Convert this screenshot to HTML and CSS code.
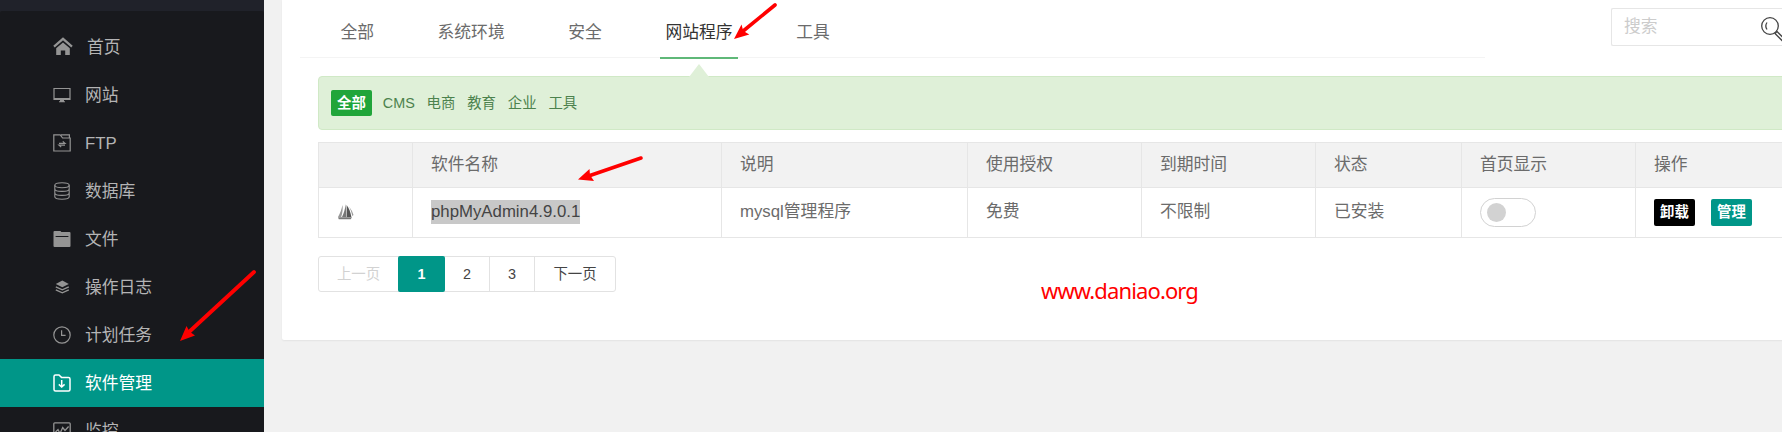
FILE: index.html
```
<!DOCTYPE html>
<html lang="zh-CN">
<head>
<meta charset="utf-8">
<title>软件管理</title>
<link rel="stylesheet" href="styles.css">
</head>
<body>
<div class="app">
  <aside class="sidebar">
    <div class="logo-bar"></div>
    <nav class="menu">
      <a class="item home"><svg class="ico" viewBox="0 0 20 20"><path d="M1 9.6 10 1.8l9 7.8" fill="none" stroke="currentColor" stroke-width="2.2"/><path d="M3.2 11.2 10 5.4l6.8 5.8V18h-4.6v-4.6H7.8V18H3.2z" fill="currentColor"/></svg><span>首页</span></a>
      <a class="item"><svg class="ico" viewBox="0 0 18 18"><path d="M1 2.5h16v11H1z" fill="none" stroke="currentColor" stroke-width="1.2"/><path d="M1 12h16v2H1zM7 14h4v2H7zM6 15.2h6v1H6z" fill="currentColor"/></svg><span>网站</span></a>
      <a class="item"><svg class="ico" viewBox="0 0 18 18"><path d="M.8 17V.8h6.4L9.6 4h7.6v13zM8 .8h8.4V4" fill="none" stroke="currentColor" stroke-width="1.2"/><path d="M6 9.3h6L9.8 7.400M12 11.200H6l2.200 1.900" fill="none" stroke="currentColor" stroke-width="1.2"/></svg><span>FTP</span></a>
      <a class="item"><svg class="ico" viewBox="0 0 18 18"><g fill="none" stroke="currentColor" stroke-width="1.1"><ellipse cx="9" cy="3.2" rx="7.2" ry="2.5"/><path d="M1.8 3.2v11.6c0 3.2 14.4 3.2 14.4 0V3.2M1.8 7c0 3.2 14.4 3.2 14.4 0M1.8 11c0 3.2 14.4 3.2 14.4 0"/></g></svg><span>数据库</span></a>
      <a class="item"><svg class="ico" viewBox="0 0 18 18"><path d="M.5 2q0-1 1-1H7q1 0 1.3 1h8.2q1 0 1 1v13q0 1-1 1h-15q-1 0-1-1zM2.600 6v.9h12.800V6z" fill="currentColor" fill-rule="evenodd"/></svg><span>文件</span></a>
      <a class="item"><svg class="ico" viewBox="0 0 18 18"><path d="M9.300 2.600 15.800 6 9.300 9.200 2.800 6z" fill="currentColor"/><path d="m2.800 8.800 6.500 3.100 6.500-3.100M2.800 11.800l6.500 3.100 6.500-3.100" fill="none" stroke="currentColor" stroke-width="1.3"/></svg><span>操作日志</span></a>
      <a class="item"><svg class="ico" viewBox="0 0 18 18"><g fill="none" stroke="currentColor" stroke-width="1.2"><circle cx="9" cy="9" r="8.2"/><path d="M8.600 4.200v5.200h4"/></g></svg><span>计划任务</span></a>
      <a class="item active"><svg class="ico" viewBox="0 0 18 18"><g fill="none" stroke="currentColor" stroke-width="1.5"><path d="M1 2.500Q1 1 2.500 1H6l2.500 2.400h7q1.500 0 1.500 1.500v10.600q0 1.500-1.500 1.500h-13Q1 17 1 15.500z"/><path d="M8.700 6v6.500M5.800 10.400l2.900 2.600 2.900-2.600"/></g></svg><span>软件管理</span></a>
      <a class="item"><svg class="ico" viewBox="0 0 18 18"><g fill="none" stroke="currentColor" stroke-width="1.3"><rect x=".8" y=".8" width="16.400" height="16.400" rx="1"/><path d="m2.500 10 2.500-2.500 2 4 2.700-6 2.300 3 3.600-4"/></g></svg><span>监控</span></a>
    </nav>
  </aside>
  <main class="content">
    <section class="card">
      <header class="head">
        <nav class="tabs"><a class="tab">全部</a><a class="tab">系统环境</a><a class="tab">安全</a><a class="tab on">网站程序</a><a class="tab">工具</a></nav>
        <div class="search"><span>搜索</span><svg class="glass" viewBox="0 0 26 26"><g fill="none" stroke="#444" stroke-width="1.300"><circle cx="10" cy="10" r="8.300"/><path d="M7 6.500q-2.400 3.500 0 7M15 17.500l2-2 7 7-2 2z"/></g></svg></div>
      </header>
      <div class="filter"><b class="chip">全部</b><a>CMS</a><a>电商</a><a>教育</a><a>企业</a><a>工具</a></div>
      <div class="table">
        <div class="row th"><div></div><div>软件名称</div><div>说明</div><div>使用授权</div><div>到期时间</div><div>状态</div><div>首页显示</div><div>操作</div></div>
        <div class="row td">
          <div><svg class="boat" viewBox="0 0 18 18"><path d="M5.500 2C4.500 6.500 3 10.500 1 14h3.200C5.500 10 6 6 5.500 2z" fill="#999"/><path d="M8.800 1C8 6 7 10 5 14h4.200z" fill="#777"/><path d="M9.600 2v12h4.800C13.500 9 12 5 9.600 2z" fill="#555"/><path d="M1 14.200h14l-1.300 2.100H1.800z" fill="#777"/><path d="M12 3.500q3.200 4 4.500 8.500l-1.200 1Q14.500 8 12 3.500z" fill="#999"/></svg></div>
          <div><span class="selected">phpMyAdmin4.9.0.1</span></div><div>mysql管理程序</div><div>免费</div><div>不限制</div><div>已安装</div>
          <div><span class="switch"><i></i></span></div>
          <div class="ops"><b class="btn black">卸载</b><b class="btn teal">管理</b></div>
        </div>
      </div>
      <div class="pager"><a class="prev">上一页</a><a class="cur">1</a><a class="num">2</a><a class="num">3</a><a class="next">下一页</a></div>
    </section>
  </main>
  <svg class="marks" viewBox="0 0 1782 432">
    <g stroke="#f00" stroke-linecap="round" fill="#f00">
      <path d="M775 5 742 32" stroke-width="3.600"/><path d="M734 39l7.500-14.500 1.800 6.500 6 3.500z" stroke="none"/>
      <path d="M641 158 590 175.500" stroke-width="3.600"/><path d="M578 179.500l11.500-10.500.5 6 4 6z" stroke="none"/>
      <path d="M254 272 189 332" stroke-width="3.800"/><path d="M180 341l6.500-15 3 5.500 5.500 4z" stroke="none"/>
    </g>
  </svg>
  <div class="watermark">www.daniao.org</div>
</div>
</body>
</html>
```
FILE: styles.css
```
* { box-sizing: border-box; }
body { margin: 0; background: #f1f1f1; font: 16.8px/24px "Liberation Sans", "Noto Sans CJK SC", sans-serif; color: #6b6b6b; }
.app { position: relative; display: flex; width: 1782px; height: 432px; overflow: hidden; }
.sidebar { width: 264px; flex: none; background: #20222a; overflow: hidden; }
.logo-bar { height: 11px; }
.menu { padding-top: 12px; background: #18191d; border-radius: 2px 2px 0 0; }
.item { display: flex; align-items: center; height: 48px; padding-left: 53px; gap: 14px; color: #b4b4b5; }
.item span { padding-top: 2px; }
.ico { width: 18px; height: 18px; color: #949494; flex: none; }
.home .ico { width: 20px; height: 20px; }
.item.active { background: #009688; color: #fff; }
.active .ico { color: #fff; }
.content { flex: none; width: 1558px; padding-left: 18px; }
.card { height: 340px; width: 1540px; background: #fff; border-radius: 0 0 2px 2px; box-shadow: 0 1px 2px rgba(0,0,0,.06); padding-left: 18px; }
.head { display: flex; justify-content: space-between; height: 76px; }
.tabs { display: flex; width: 1185px; height: 58px; border-bottom: 1px solid #f4f4f4; padding-left: 35px; gap: 52.800px; }
.tab { height: 59px; padding: 21px 5.400px 0; }
.tab.on { color: #333; border-bottom: 2px solid #5fb878; }
.search { display: flex; justify-content: space-between; align-items: center; width: 211px; height: 38px; margin-top: 8px; padding: 0 0 1px 12px; border: 1px solid #e6e6e6; border-right: 0; border-radius: 2px; color: #ccc; }
.glass { width: 26px; height: 26px; margin: 4px 36px 0 0; }
.filter { position: relative; display: flex; align-items: center; gap: 12px; width: 1500px; height: 54px; margin-left: 18px; padding-left: 12px; background: #dff0d8; border: 1px solid #d0e9c6; border-radius: 4px; font-size: 14.400px; color: #4c824d; }
.filter::before { content: ""; position: absolute; left: 370px; top: -13px; border: 10.500px solid transparent; border-top: 0; border-bottom: 13px solid #dff0d8; }
.filter a { margin-right: -.2px; }
.chip { padding: 0 6px; margin-right: -1px; height: 26px; line-height: 26px; border-radius: 2px; background: #20a53a; color: #fff; }
.table { width: 1500px; margin: 12px 0 0 18px; border-top: 1px solid #e6e6e6; }
.row { display: grid; grid-template-columns: 94px 309px 246px 174px 174px 146px 174px 1fr; border-bottom: 1px solid #e6e6e6; }
.row > div { display: flex; align-items: center; border-left: 1px solid #e6e6e6; padding-left: 18px; }
.th { height: 45px; background: #f2f2f2; }
.td { height: 50px; }
.td > div { padding-bottom: 1px; }
.boat { width: 18px; height: 18px; }
.selected { background: #c8c8c8; color: #444; }
.switch { width: 56px; height: 29px; border: 1px solid #d2d2d2; border-radius: 15px; padding: 4px 6px; }
.switch i { display: block; width: 19px; height: 19px; border-radius: 50%; background: #d2d2d2; }
.ops { gap: 16px; }
.btn { width: 41px; height: 27px; border-radius: 2px; color: #fff; font-size: 14.400px; line-height: 27px; text-align: center; }
.black { background: #000; }
.teal { background: #009688; }
.pager { display: flex; width: 298px; height: 36px; margin: 18px 0 0 18px; border: 1px solid #e2e2e2; border-radius: 3px; font-size: 14.400px; line-height: 35px; text-align: center; color: #444; }
.prev { width: 79px; color: #d2d2d2; }
.cur { width: 47px; height: 36px; line-height: 37px; margin-top: -1px; background: #009688; color: #fff; font-weight: 700; border-radius: 2px; }
.num { width: 45px; border-right: 1px solid #e2e2e2; }
.next { flex: 1; }
.marks { position: absolute; left: 0; top: 0; width: 1782px; height: 432px; }
.watermark { position: absolute; left: 1041px; top: 275px; font: 22px/30px "Noto Sans", sans-serif; letter-spacing: -.88px; color: #f00; }
```
